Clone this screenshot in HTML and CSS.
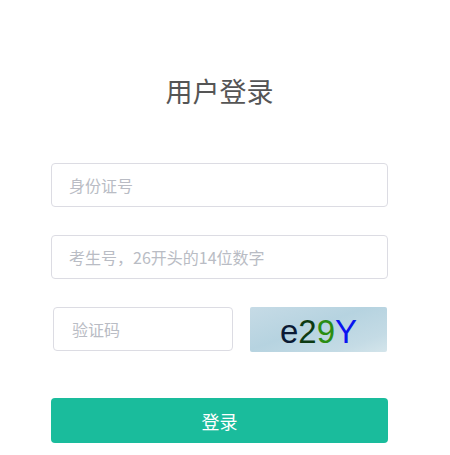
FILE: index.html
```html
<!DOCTYPE html>
<html lang="zh-CN">

<head>
  <meta charset="UTF-8" />
  <meta name="viewport" content="width=device-width, initial-scale=1.0" />
  <title>用户登录</title>
  <link rel="stylesheet" href="styles.css">
</head>

<body>
  <div class="login">
    <h1 class="title">用户登录</h1>
    <form class="form">
      <input class="field" type="text" placeholder="身份证号" />
      <input class="field" type="text" placeholder="考生号，26开头的14位数字" />
      <div class="captcha-row">
        <input class="field captcha-input" type="text" placeholder="验证码" />
        <div class="captcha">
          <span class="c1">e</span><span class="c2">2</span><span class="c3">9</span><span class="c4">Y</span>
        </div>
      </div>
      <button type="button" class="submit">登录</button>
    </form>
  </div>
</body>

</html>
```

FILE: styles.css
```css
* {
  box-sizing: border-box;
  font-family: 'Microsoft YaHei', 'Noto Sans CJK SC', sans-serif;
}

body {
  margin: 0;
  background-color: #fff;
  color: #555;
}

.login {
  width: 337px;
  margin-left: 51px;
  padding-top: 68px;
}

.title {
  margin: 0;
  text-align: center;
  font-size: 27px;
  font-weight: 400;
  line-height: 46px;
  color: #555;
}

.form {
  display: flex;
  flex-direction: column;
  margin-top: 49px;
}

.field {
  display: block;
  width: 100%;
  height: 44px;
  padding: 0 17px;
  border: 1px solid #dcdce3;
  border-radius: 4px;
  font-size: 16px;
  color: #333;
  outline: none;
  margin-bottom: 28px;
}

.field::placeholder {
  color: #b9bcc4;
}

.captcha-row {
  display: flex;
  align-items: flex-start;
  justify-content: space-between;
  margin-bottom: 46px;
}

.captcha-input {
  width: 180px;
  margin: 0 0 0 2px;
  padding: 0 18px;
}

.captcha {
  width: 137px;
  height: 45px;
  margin-right: 1px;
  background: linear-gradient(160deg, #c6dbe6 0%, #b6d3e0 45%, #c4dbe5 80%, #d4e5eb 100%);
  border-radius: 2px;
  text-align: center;
  font-size: 33px;
  line-height: 45px;
}

.captcha span {
  font-family: 'Liberation Sans', Arial, sans-serif;
}

.c1 { color: #0b1a34; }
.c2 { color: #0c3a12; }
.c3 { color: #2a8d12; }
.c4 { color: #0a14f0; }

.submit {
  width: 100%;
  height: 45px;
  border: none;
  border-radius: 4px;
  background-color: #1abc9c;
  color: #fff;
  font-size: 18px;
  cursor: pointer;
}
```
